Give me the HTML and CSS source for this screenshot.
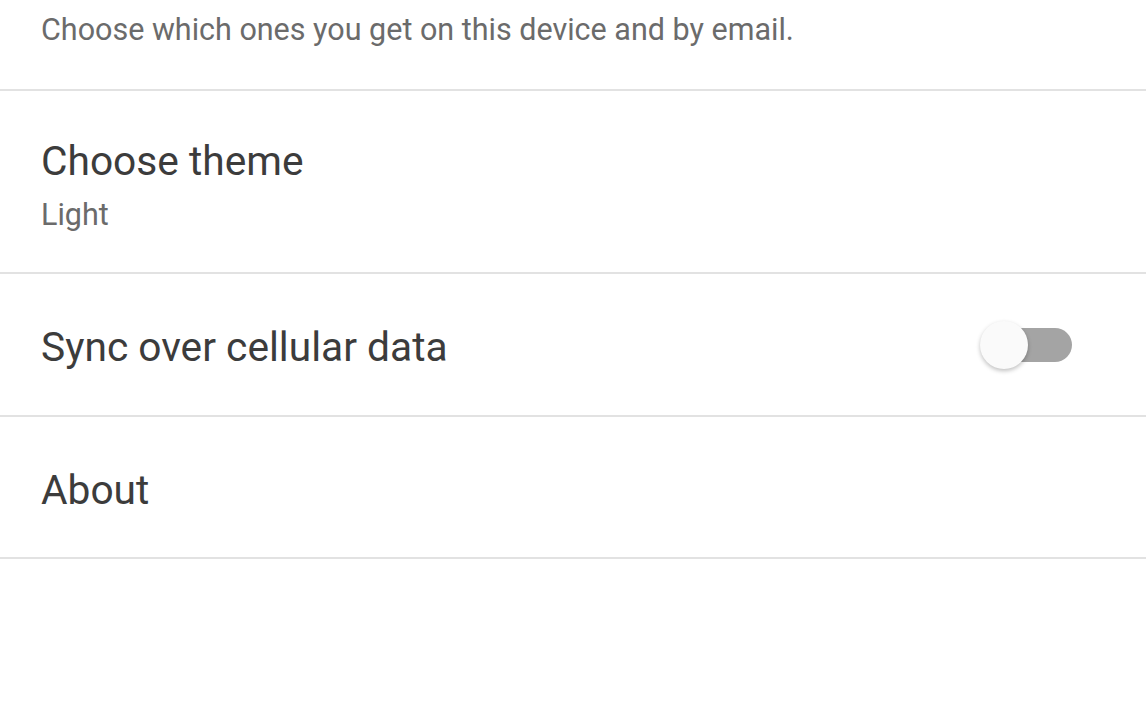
FILE: index.html
```html
<!DOCTYPE html>
<html>
<head>
<meta charset="utf-8">
<link rel="stylesheet" href="styles.css">
</head>
<body>
<div class="list">
  <div class="row row-top">
    <div class="sub">Choose which ones you get on this device and by email.</div>
  </div>
  <div class="row row-theme">
    <div class="title">Choose theme</div>
    <div class="sub sub-light">Light</div>
  </div>
  <div class="row row-sync">
    <div class="title">Sync over cellular data</div>
    <div class="switch"><div class="track"></div><div class="thumb"></div></div>
  </div>
  <div class="row row-about">
    <div class="title">About</div>
  </div>
</div>
</body>
</html>
```
FILE: styles.css
```css
html, body { margin: 0; padding: 0; background: #fff; }
body { font-family: Roboto, "Noto Sans", sans-serif; width: 1146px; height: 716px; overflow: hidden; }
.list { display: flex; flex-direction: column; }
.row { border-bottom: 2px solid #e2e2e2; padding: 0 41px; display: flex; flex-direction: column; justify-content: flex-start; box-sizing: border-box; }
.row-top { height: 91px; padding-top: 12px; }
.row-theme { height: 183px; padding-top: 47px; }
.row-sync { height: 143px; flex-direction: row; align-items: center; justify-content: space-between; padding-right: 74px; padding-top: 4px; }
.row-about { height: 142px; justify-content: center; padding-top: 5px; }
.title { font-size: 40.7px; color: #3c3c3c; line-height: 46px; }
.sub { font-size: 30.5px; color: #6b6b6b; line-height: 36px; }
.sub-light { margin-top: 13px; }
.switch { position: relative; width: 92px; height: 52px; margin-top: -4px; }
.track { position: absolute; right: 0; top: 9px; width: 82px; height: 34px; border-radius: 17px; background: #a4a4a4; }
.thumb { position: absolute; left: 0; top: 2px; width: 48px; height: 48px; border-radius: 50%; background: #fafafa; box-shadow: 0 2px 4px rgba(0,0,0,0.25); }
```
